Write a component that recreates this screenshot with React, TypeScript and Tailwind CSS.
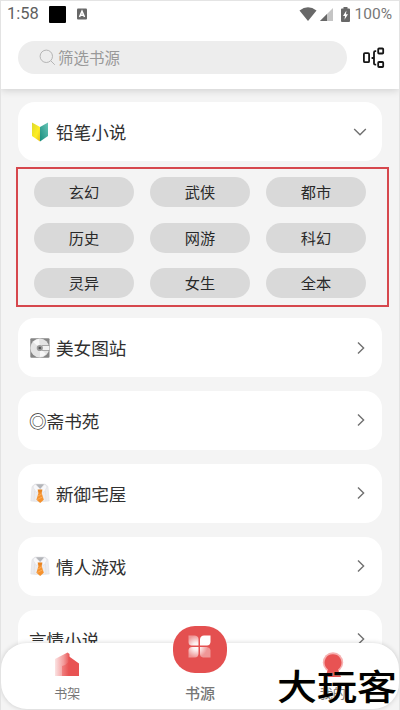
import React from "react"

const categories = ["玄幻", "武侠", "都市", "历史", "网游", "科幻", "灵异", "女生", "全本"]

function BeginnerMark() {
  return (
    <svg width="16" height="20" viewBox="0 0 16 20" className="ml-[3px] mr-2 shrink-0">
      <defs>
        <linearGradient id="leafYellow" x1="0" y1="0" x2="1" y2="1">
          <stop offset="0" stopColor="#ddd82e" />
          <stop offset="0.6" stopColor="#fdee25" />
          <stop offset="1" stopColor="#e5bd1d" />
        </linearGradient>
        <linearGradient id="leafGreen" x1="0" y1="1" x2="1" y2="0">
          <stop offset="0" stopColor="#188c7c" />
          <stop offset="1" stopColor="#67c5b7" />
        </linearGradient>
      </defs>
      <path d="M0 0.5 L8 5 V19.5 L0 14Z" fill="url(#leafYellow)" />
      <path d="M16 0.5 L8 5 V19.5 L16 14Z" fill="url(#leafGreen)" />
    </svg>
  )
}

function DiscIcon() {
  return (
    <svg width="20" height="20" viewBox="0 0 20 20" className="ml-px mr-1.5 shrink-0">
      <rect x="0.3" y="0.3" width="19.2" height="19.4" rx="1" fill="#858585" />
      <circle cx="9.8" cy="10" r="9.4" fill="#e4e4e4" />
      <path d="M10 10 L3 4 A9 9 0 0 1 9 1Z M10 10 L16 16 A9 9 0 0 1 10 19Z" fill="#f7f7f7" />
      <path d="M12 7.5 H19.5 M12 12.5 H19.5" stroke="#999" strokeWidth="0.8" />
      <rect x="12" y="8" width="7" height="4" fill="#f1f1f1" />
      <circle cx="9.8" cy="10" r="3.1" fill="#9b9b9b" />
      <circle cx="9.8" cy="10" r="1.3" fill="#555" />
    </svg>
  )
}

function ShirtIcon() {
  return (
    <svg width="20" height="20" viewBox="0 0 20 20" className="ml-px mr-1.5 shrink-0">
      <path d="M5 1 H15 L18 3.5 L19.2 18 Q10 19.5 0.8 18 L2 3.5Z" fill="#ececef" stroke="#dcdce0" strokeWidth="0.5" />
      <path d="M4.5 8 L4 18 M15.5 8 L16 18" stroke="#dadade" strokeWidth="0.5" />
      <path d="M6 1.3 H14 L10.3 6.2Z" fill="#b3b5b9" />
      <path d="M5 1 L10 6 L6.3 9.5 L3 4Z M15 1 L10.3 6 L14 9.5 L17 4Z" fill="#f8f8fa" stroke="#d5d5d9" strokeWidth="0.4" />
      <path d="M7.6 6.6 L12.4 6.6 L11.6 10 H8.5Z" fill="#e98420" />
      <path d="M8.6 9.4 H11.5 L13.8 16.8 L10.2 20 L6.4 16.8Z" fill="#f5922e" />
      <path d="M8 13 L11.8 11 M7.2 16.5 L12.8 13.8" stroke="#ffb76a" strokeWidth="0.7" />
    </svg>
  )
}

function Chevron({ down = false }: { down?: boolean }) {
  return (
    <svg width="14" height="14" viewBox="0 0 14 14" fill="none" stroke="#707070" strokeWidth="1.4" className="shrink-0">
      {down ? <path d="M1.2 4 L7 9.8 L12.8 4" /> : <path d="M5 1.4 L10.6 7 L5 12.6" />}
    </svg>
  )
}

type SourceCardProps = { name: string; icon?: React.ReactNode; open?: boolean }

function SourceCard({ name, icon, open }: SourceCardProps) {
  return (
    <div className="flex h-[59px] shrink-0 items-center rounded-[17px] bg-white pl-[11px] pr-[15px] text-[#303030]">
      {icon}
      <span className="flex-1 text-[17.6px] leading-[23px]">{name}</span>
      <Chevron down={open} />
    </div>
  )
}

function StatusBar() {
  return (
    <div className="flex h-[26px] items-center pl-1.5 pr-[7px] font-[Roboto] text-[#666]">
      <span className="w-[42px] text-[16.5px] leading-5 text-[#5f5f5f]">1:58</span>
      <div className="h-[17px] w-[17px] rounded-[1px] bg-black" />
      <svg width="10" height="12" viewBox="0 0 10 12" className="ml-[11px]">
        <rect y="0.5" width="10" height="11" rx="1" fill="#686868" />
        <path d="M2.5 9 L5 3.2 L7.5 9 M3.5 7.3 H6.5" fill="none" stroke="white" strokeWidth="1.5" />
      </svg>
      <div className="flex-1" />
      <svg width="18" height="14" viewBox="0 0 18 14">
        <path d="M0.5 3.5 Q9 -2.8 17.5 3.5 L9 14Z" fill="#686868" />
      </svg>
      <svg width="13" height="13" viewBox="0 0 13 13" className="ml-[3px]">
        <path d="M13 0 V13 H0Z" fill="#c5c5c5" />
        <path d="M7 6 V13 H0Z" fill="#686868" />
      </svg>
      <svg width="9" height="15" viewBox="0 0 9 15" className="ml-[8px]">
        <path d="M2.5 0 H6.5 V1.5 H8 Q9 1.5 9 2.5 V14 Q9 15 8 15 H1 Q0 15 0 14 V2.5 Q0 1.5 1 1.5 H2.5Z" fill="#686868" />
        <path d="M5.4 3.5 L2 9 H4 L3.5 12.8 L7 7.3 H5Z" fill="white" />
      </svg>
      <span className="ml-[5px] text-[15.5px] leading-5 text-[#777]">100%</span>
    </div>
  )
}

function Header() {
  return (
    <header className="relative z-10 h-[89px] shrink-0 border-t border-[#e4e4e4] bg-white shadow-[0_1px_8px_rgba(0,0,0,0.17)]">
      <StatusBar />
      <div className="mt-3.5 flex items-center pl-[17px]">
        <div className="flex h-[33px] w-[329px] items-center rounded-full bg-[#ededed] pl-[21px] text-[#999]">
          <svg width="17" height="17" viewBox="0 0 17 17" fill="none" stroke="#b5b5b5" strokeWidth="1">
            <circle cx="7.3" cy="7.3" r="6.2" />
            <path d="M11.8 11.8 L15.8 15.8" />
          </svg>
          <span className="ml-[2px] pb-px text-[15.5px] leading-6">筛选书源</span>
        </div>
        <svg width="22" height="22" viewBox="0 0 22 22" fill="none" stroke="#161616" strokeWidth="1.8" className="ml-4">
          <rect x="0.9" y="6.2" width="5.2" height="9" rx="1" />
          <path d="M13.2 4.2 H12.2 Q11 4.2 11 5.4 V16.4 Q11 17.6 12.2 17.6 H13.2 M8.6 11 H11" />
          <rect x="15.2" y="1.5" width="5" height="5" rx="0.8" />
          <rect x="15.2" y="15" width="5" height="5" rx="0.8" />
        </svg>
      </div>
    </header>
  )
}

function BottomNav() {
  return (
    <nav className="absolute inset-x-0 bottom-px z-20 grid h-[66px] grid-cols-3 rounded-[26px] bg-white text-[#777] shadow-[0_0_5px_rgba(0,0,0,0.17)]">
      <div className="flex flex-col items-center pt-[9px]">
        <svg width="26" height="24" viewBox="0 0 26 24">
          <defs>
            <linearGradient id="shelfFade">
              <stop offset="0" stopColor="#fbe3e3" />
              <stop offset="0.6" stopColor="#f39a9a" />
              <stop offset="1" stopColor="#e85353" />
            </linearGradient>
            <linearGradient id="shelfFront">
              <stop offset="0" stopColor="#f08080" />
              <stop offset="0.4" stopColor="#e85353" />
            </linearGradient>
          </defs>
          <path d="M1 7 L13.5 0.5 L15.5 2 V24 H1Z" fill="url(#shelfFade)" />
          <path d="M14.5 4 L25 11.5 V24 H8 V14 Q12 13 14.5 10Z" fill="url(#shelfFront)" />
        </svg>
        <span className="mt-[7px] text-[13px] leading-5">书架</span>
      </div>
      <div className="flex flex-col items-center">
        <div className="-mt-[17px] flex h-[47px] w-[54px] items-start justify-center rounded-[22px] bg-[#e45050] pt-[9px]">
          <svg width="23" height="23" viewBox="0 0 23 23">
            <defs>
              <radialGradient id="tileFade" gradientUnits="userSpaceOnUse" cx="8.5" cy="11.5" r="11">
                <stop offset="0" stopColor="white" />
                <stop offset="0.35" stopColor="white" stopOpacity="0.9" />
                <stop offset="1" stopColor="white" stopOpacity="0.4" />
              </radialGradient>
            </defs>
            <path d="M0.5 0.5 H7 Q10.5 1 10.5 4 V10.5 H3 Q0.5 10 0.5 7Z" fill="url(#tileFade)" />
            <path d="M12 10.5 V4 Q12.5 0.5 16 0.5 H22.5 V7 Q22 10.5 19 10.5Z" fill="white" />
            <path d="M0.5 22.5 V15 Q1 12 4 12 H10.5 V19 Q10 22.5 7 22.5Z" fill="url(#tileFade)" />
            <path d="M12 12 H19 Q22 12.5 22.5 15 V22.5 H15 Q12 22 12 19Z" fill="url(#tileFade)" />
          </svg>
        </div>
        <span className="mt-[9px] text-[15px] font-medium leading-[22px]">书源</span>
      </div>
      <div className="flex flex-col items-center pt-[9px]">
        <svg width="24" height="26" viewBox="0 0 24 26">
          <circle cx="12" cy="10.5" r="10.2" fill="#f6b1b1" />
          <path d="M3.5 10.5 A8.5 8.5 0 1 1 17 17.5 L20 25 H4 L7 17.5 Q3.5 14.5 3.5 10.5Z" fill="#e85353" />
        </svg>
        <span className="mt-[5px] text-[13px] leading-5">我的</span>
      </div>
    </nav>
  )
}

export default function App() {
  return (
    <div className="relative flex h-[710px] w-[400px] flex-col overflow-hidden border-x border-[#e3e3e3] bg-[#f4f4f4] font-['Noto_Sans_CJK_SC',sans-serif]">
      <Header />
      <main className="flex flex-col px-[17px] pt-[13px]">
        <SourceCard name="铅笔小说" icon={<BeginnerMark />} open />
        <div className="-ml-[2px] -mr-[7px] mt-1.5 mb-[11px] grid h-[140px] shrink-0 grid-cols-[repeat(3,100px)] content-start justify-start gap-x-4 gap-y-[15.5px] border-2 border-[#d6474d] pl-4 pt-2">
          {categories.map((name) => (
            <div key={name} className="flex h-[30px] items-center justify-center rounded-full bg-[#d9d9d9] pb-px text-[15.2px] text-[#292929]">
              {name}
            </div>
          ))}
        </div>
        <div className="flex flex-col gap-[13.9px]">
          <SourceCard name="美女图站" icon={<DiscIcon />} />
          <SourceCard name="◎斋书苑" />
          <SourceCard name="新御宅屋" icon={<ShirtIcon />} />
          <SourceCard name="情人游戏" icon={<ShirtIcon />} />
          <SourceCard name="言情小说" />
        </div>
      </main>
      <BottomNav />
      <div className="absolute bottom-[5px] right-0.5 z-30 origin-bottom scale-y-[0.88] text-[40px] font-medium leading-[46px] text-black [text-shadow:0_0_1px_#e8e2b8]">
        大玩客
      </div>
    </div>
  )
}
